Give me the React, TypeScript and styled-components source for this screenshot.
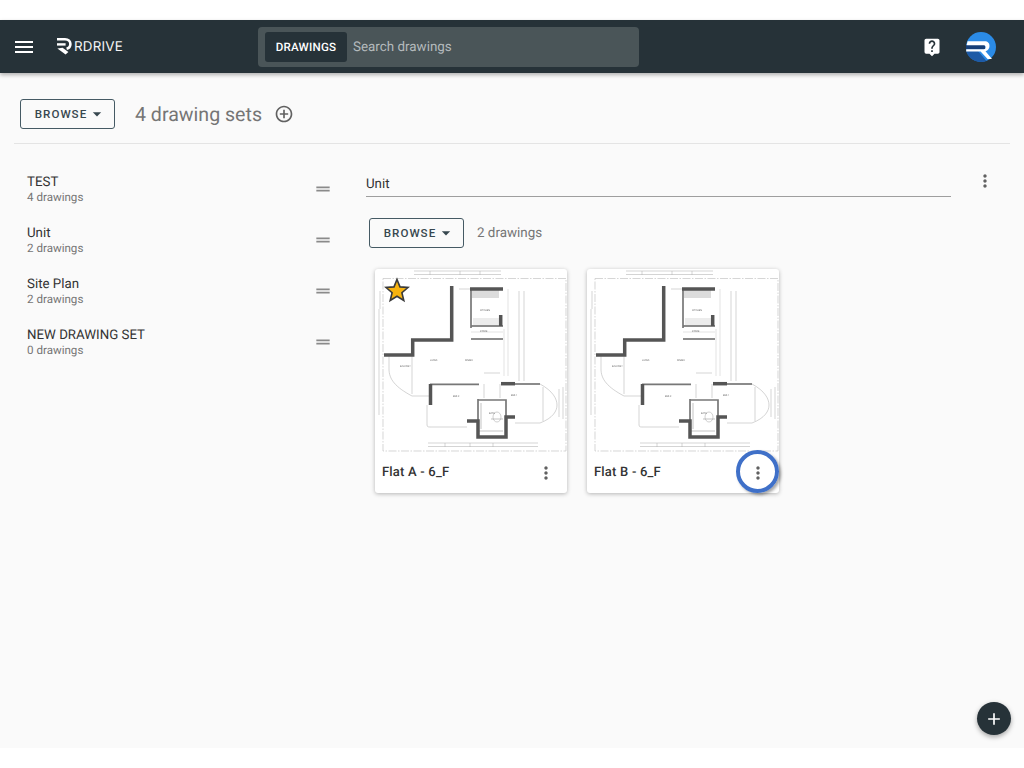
import { createGlobalStyle } from "styled-components"
import styled from "styled-components"
import {
  MdAdd,
  MdAddCircleOutline,
  MdArrowDropDown,
  MdDragHandle,
  MdLiveHelp,
  MdMenu,
  MdMoreVert,
} from "react-icons/md"

const GlobalStyle = createGlobalStyle`
  html, body {
    margin: 0;
    padding: 0;
    background: #ffffff;
    font-family: Roboto, "Liberation Sans", sans-serif;
    text-rendering: geometricPrecision;
  }
  * { box-sizing: border-box; }
`

const Page = styled.div`
  position: relative;
  width: 1024px;
  height: 768px;
  padding: 20px 0;
  overflow: hidden;
  background: #ffffff;
`

const Screen = styled.div`
  position: relative;
  height: 728px;
  display: flex;
  flex-direction: column;
  background: #fafafa;
`

const TopBar = styled.header`
  height: 53px;
  flex: none;
  display: flex;
  align-items: center;
  background: #263238;
  color: #ffffff;
  box-shadow: 0 2px 4px rgba(0, 0, 0, 0.3);
`

const MenuSlot = styled.div`
  width: 56px;
  display: flex;
  justify-content: center;
  padding-right: 8px;
  font-size: 24px;
  line-height: 0;
`

const Logo = styled.div`
  width: 202px;
  display: flex;
  align-items: center;
  gap: 2px;
`

const LogoText = styled.span`
  font-family: Inter, Roboto, sans-serif;
  font-size: 13.4px;
  font-weight: 400;
  letter-spacing: 0.2px;
  color: #f5f5f5;
`

const SearchBox = styled.div`
  width: 381px;
  height: 40px;
  display: flex;
  align-items: center;
  gap: 6px;
  padding: 0 7px;
  border-radius: 4px;
  background: #4a5558;
`

const SearchScope = styled.div`
  width: 82px;
  height: 30px;
  display: flex;
  align-items: center;
  justify-content: center;
  border-radius: 3px;
  background: #263238;
  font-size: 11.6px;
  font-weight: 500;
  letter-spacing: 0.2px;
`

const SearchHint = styled.span`
  padding-top: 2px;
  font-size: 13.4px;
  color: #b4babc;
`

const BarActions = styled.div`
  margin-left: auto;
  display: flex;
  align-items: center;
  gap: 24px;
  padding-right: 28px;
  line-height: 0;
  font-size: 20px;
`

const Content = styled.main`
  flex: 1;
  display: flex;
  flex-direction: column;
  padding: 26px 14px 0;
`

const SetsToolbar = styled.div`
  height: 30px;
  display: flex;
  align-items: center;
  padding-left: 6px;
`

const BrowseButton = styled.button`
  width: 95px;
  height: 30px;
  display: flex;
  align-items: center;
  justify-content: center;
  padding: 0 0 0 7px;
  border: 1px solid #455a64;
  border-radius: 3px;
  background: transparent;
  color: #37474f;
  font-family: inherit;
  font-size: 11.6px;
  font-weight: 500;
  letter-spacing: 1px;
  line-height: 0;

  svg {
    font-size: 20px;
  }
`

const SetsTitle = styled.span`
  margin-left: 20px;
  font-size: 19.6px;
  color: #757575;
`

const AddSet = styled.span`
  margin-left: 12px;
  font-size: 20px;
  line-height: 0;
  color: #616161;
`

const Divider = styled.hr`
  width: 996px;
  height: 1px;
  margin: 14px 0 0;
  border: 0;
  background: #e4e4e4;
`

const Columns = styled.div`
  display: flex;
  padding-top: 28px;
`

const SetList = styled.ul`
  width: 352px;
  flex: none;
  margin: 0;
  padding: 0 0 0 13px;
  list-style: none;
`

const SetRow = styled.li`
  height: 51px;
  display: flex;
  justify-content: space-between;
  padding-right: 33px;
`

const SetName = styled.div`
  margin: 2px 0 -2px;
  font-size: 13.3px;
  line-height: 18px;
  color: #333333;
`

const SetCount = styled.div`
  font-size: 11.6px;
  line-height: 15px;
  color: #757575;
`

const Handle = styled.span`
  margin-top: 7px;
  font-size: 20px;
  line-height: 0;
  color: #8a8a8a;
`

const Detail = styled.section`
  flex: 1;
  display: flex;
  flex-direction: column;
`

const NameRow = styled.div`
  display: flex;
  align-items: flex-start;
`

const NameField = styled.div`
  width: 585px;
  height: 25px;
  padding-top: 4px;
  border-bottom: 1px solid #9e9e9e;
  font-size: 13.3px;
  line-height: 18px;
  color: #333333;
`

const MoreSlot = styled.span`
  display: flex;
  font-size: 20px;
  line-height: 0;
  color: #616161;
`

const NameMore = styled(MoreSlot)`
  margin: -1px 0 0 24px;
`

const DrawingsToolbar = styled.div`
  height: 30px;
  display: flex;
  align-items: center;
  margin: 21px 0 0 3px;
`

const DrawingsCount = styled.span`
  margin-left: 13px;
  font-size: 13.4px;
  color: #757575;
`

const Cards = styled.div`
  display: flex;
  gap: 20px;
  margin: 21px 0 0 9px;
`

const Card = styled.article`
  position: relative;
  width: 192px;
  height: 224px;
  display: flex;
  flex-direction: column;
  border-radius: 3px;
  background: #ffffff;
  box-shadow: 0 1px 4px rgba(0, 0, 0, 0.28);
`

const PlanFrame = styled.div`
  height: 186px;
  flex: none;
  filter: blur(0.4px);
`

const CardFooter = styled.div`
  flex: 1;
  display: flex;
  align-items: center;
  justify-content: space-between;
  padding: 0 11px 3px 7px;
`

const CardTitle = styled.span`
  font-size: 13px;
  font-weight: 500;
  letter-spacing: 0.2px;
  color: #333333;
`

const StarBadge = styled.div`
  position: absolute;
  top: 8px;
  left: 9px;
  line-height: 0;
`

const FocusRing = styled.div`
  position: absolute;
  right: 0;
  bottom: 0;
  width: 43px;
  height: 43px;
  border: 4px solid #3f70c8;
  border-radius: 50%;
  box-shadow: 2px 2px 3px rgba(0, 0, 0, 0.35);
`

const Fab = styled.button`
  position: absolute;
  top: 682px;
  left: 977px;
  width: 34px;
  height: 33px;
  display: flex;
  align-items: center;
  justify-content: center;
  padding: 0;
  border: 0;
  border-radius: 50%;
  background: #263238;
  color: #ffffff;
  font-size: 20px;
  box-shadow: 0 2px 5px rgba(0, 0, 0, 0.35);
`

function LogoMark() {
  return (
    <svg width="16" height="19" viewBox="0 0 16 19">
      <path
        d="M1 2.2 H9 C12.6 2.2 14.4 4.4 14.4 7 C14.4 9.4 12.8 11.2 10.6 11.8"
        fill="none"
        stroke="#ffffff"
        strokeWidth="2.6"
      />
      <path d="M1 7.4 H9.6" fill="none" stroke="#ffffff" strokeWidth="2.4" />
      <path d="M1.4 11.6 L9.6 17.6 L12.4 15 L6.6 10.8 Z" fill="#ffffff" />
    </svg>
  )
}

function Avatar() {
  return (
    <svg width="30" height="30" viewBox="0 0 30 30">
      <circle cx="15" cy="15" r="15" fill="#2b8be6" />
      <path d="M0 13 H19 V17.5 H0 Z" fill="#163f78" />
      <path d="M0.2 19 H12 L20.5 29 C18.8 29.7 17 30 15 30 C7 30 1 24 0.2 19 Z" fill="#1d5aa6" />
      <path
        d="M1.6 9.3 H18.5 C22 9.3 23.5 11.4 23.5 14 C23.5 16.6 22 18.6 19.5 19.2 L26 27 H21.6 L14.6 19.5 H0.2 V17.3 H18 C20.2 17.3 20.2 13.3 18 13.3 H0.6 Z"
        fill="#ffffff"
      />
    </svg>
  )
}

const THICK_WALLS = [
  "M76.7 17 V71 H37.7 V86 H9",
  "M95 20 H128",
  "M125.7 46 V57",
  "M55.5 115 V136",
  "M126 114.7 H140",
  "M92 152 H103 V168 H131 V148 H140",
]

const GREY_WALLS = [
  "M96 20 V59",
  "M96 57 H128",
  "M96 70 H128",
  "M55 115.4 H104",
  "M140 115 H165",
  "M103 130 V153",
  "M103 131 H131 V149",
]

const THIN_LINES = [
  "M39 2 H126 M39 5.5 H126 M55 2 V6 M85 2 V6 M105 2 V6",
  "M53 174 H163 M53 177.5 H163 M70 174 V178 M95 174 V178 M118 174 V178",
  "M144 22 V112 M149 22 V112",
  "M4 40 V146 M5 22 V40",
  "M84 20 H95",
  "M14 86 V100 C14 110 20 118 37 127 H55 M37 86 V125",
  "M52 136 V153 C52 158 52 158 56 158 H92",
  "M165 115 C178 122 182 130 182 136 C182 142 178 149 165 154 M168 118 V152",
  "M140 154 H165 M109 115 V129 M125 115 V129 M109 104 H125",
  "M188 118 V150 M184 120 V148",
]

const FAINT_LINES = ["M133 20 V107", "M129 60 V107", "M96 63 H128"]

const PLAN_LABELS = [
  { x: 55, y: 92, text: "LIVING" },
  { x: 90, y: 92, text: "DINING" },
  { x: 25, y: 98, text: "BALCONY" },
  { x: 78, y: 128, text: "BED 2" },
  { x: 136, y: 127, text: "BED 1" },
  { x: 105, y: 42, text: "KITCHEN" },
  { x: 105, y: 63, text: "STORE" },
  { x: 114, y: 145, text: "BATH" },
]

function FloorPlan() {
  return (
    <svg width="192" height="186" viewBox="0 0 192 186">
      <rect
        x="8"
        y="9.5"
        width="183"
        height="172.5"
        fill="none"
        stroke="#c4c4c4"
        strokeWidth="0.7"
        strokeDasharray="8 1.5 1.5 1.5"
      />
      {THIN_LINES.map((d) => (
        <path key={d} d={d} fill="none" stroke="#a8a8a8" strokeWidth="0.5" />
      ))}
      {FAINT_LINES.map((d) => (
        <path key={d} d={d} fill="none" stroke="#d2d2d2" strokeWidth="0.6" />
      ))}
      <path d="M97 21 H124 V29 H97 Z" fill="#dcdcdc" />
      <path d="M98 49 H124 V56 H98 Z" fill="#ececec" />
      <path d="M102 162 H128 M106 134 V160 M116 150 H128" stroke="#9a9a9a" strokeWidth="0.6" />
      <ellipse cx="122" cy="148" rx="4" ry="5" fill="none" stroke="#a0a0a0" strokeWidth="0.5" />
      {GREY_WALLS.map((d) => (
        <path key={d} d={d} fill="none" stroke="#777777" strokeWidth="1.7" />
      ))}
      {THICK_WALLS.map((d) => (
        <path key={d} d={d} fill="none" stroke="#555555" strokeWidth="3.5" />
      ))}
      {PLAN_LABELS.map((label) => (
        <text key={label.text} x={label.x} y={label.y} fontSize="2.4" fill="#666666">
          {label.text}
        </text>
      ))}
    </svg>
  )
}

function Star() {
  return (
    <svg width="26" height="26" viewBox="0 0 26 26">
      <path
        d="M13 2.5 L16 9.9 L24 10.5 L17.9 15.7 L19.8 23.5 L13 19.3 L6.2 23.5 L8.1 15.7 L2 10.5 L10 9.9 Z"
        fill="#f7b30f"
        stroke="#3a3a3a"
        strokeWidth="1.6"
        strokeLinejoin="miter"
      />
    </svg>
  )
}

const SETS = [
  { name: "TEST", count: "4 drawings" },
  { name: "Unit", count: "2 drawings" },
  { name: "Site Plan", count: "2 drawings" },
  { name: "NEW DRAWING SET", count: "0 drawings" },
]

const DRAWINGS = [
  { title: "Flat A - 6_F", starred: true, focused: false },
  { title: "Flat B - 6_F", starred: false, focused: true },
]

export default function App() {
  return (
    <Page>
      <GlobalStyle />
      <Screen>
        <TopBar>
          <MenuSlot>
            <MdMenu />
          </MenuSlot>
          <Logo>
            <LogoMark />
            <LogoText>RDRIVE</LogoText>
          </Logo>
          <SearchBox>
            <SearchScope>DRAWINGS</SearchScope>
            <SearchHint>Search drawings</SearchHint>
          </SearchBox>
          <BarActions>
            <MdLiveHelp />
            <Avatar />
          </BarActions>
        </TopBar>

        <Content>
          <SetsToolbar>
            <BrowseButton>
              BROWSE
              <MdArrowDropDown />
            </BrowseButton>
            <SetsTitle>4 drawing sets</SetsTitle>
            <AddSet>
              <MdAddCircleOutline />
            </AddSet>
          </SetsToolbar>
          <Divider />

          <Columns>
            <SetList>
              {SETS.map((set) => (
                <SetRow key={set.name}>
                  <div>
                    <SetName>{set.name}</SetName>
                    <SetCount>{set.count}</SetCount>
                  </div>
                  <Handle>
                    <MdDragHandle />
                  </Handle>
                </SetRow>
              ))}
            </SetList>

            <Detail>
              <NameRow>
                <NameField>Unit</NameField>
                <NameMore>
                  <MdMoreVert />
                </NameMore>
              </NameRow>
              <DrawingsToolbar>
                <BrowseButton>
                  BROWSE
                  <MdArrowDropDown />
                </BrowseButton>
                <DrawingsCount>2 drawings</DrawingsCount>
              </DrawingsToolbar>
              <Cards>
                {DRAWINGS.map((drawing) => (
                  <Card key={drawing.title}>
                    <PlanFrame>
                      <FloorPlan />
                    </PlanFrame>
                    <CardFooter>
                      <CardTitle>{drawing.title}</CardTitle>
                      <MoreSlot>
                        <MdMoreVert />
                      </MoreSlot>
                    </CardFooter>
                    {drawing.starred && (
                      <StarBadge>
                        <Star />
                      </StarBadge>
                    )}
                    {drawing.focused && <FocusRing />}
                  </Card>
                ))}
              </Cards>
            </Detail>
          </Columns>
        </Content>

        <Fab>
          <MdAdd />
        </Fab>
      </Screen>
    </Page>
  )
}
